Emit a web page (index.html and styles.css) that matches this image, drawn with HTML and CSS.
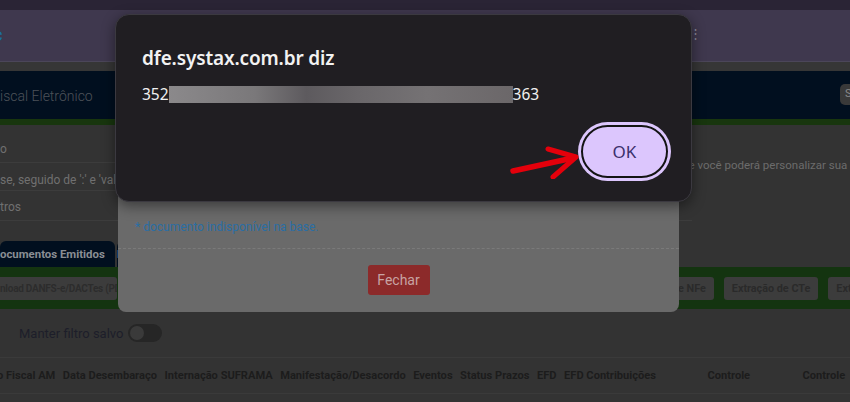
FILE: index.html
```html
<!DOCTYPE html>
<html lang="pt-BR">
<head>
<meta charset="utf-8">
<title>Systax DFe</title>
<link rel="stylesheet" href="styles.css">
</head>
<body>
<div class="page">
  <div class="topstrip"></div>
  <div class="browserbar"><span class="logo-c">c</span><span class="kebab">⋮</span></div>
  <div class="graystrip"></div>
  <header class="navbar">
    <span class="brand">iscal Eletrônico</span>
    <span class="userbtn">S</span>
  </header>
  <div class="greenline"></div>
  <section class="info">
    <div class="info-left">
      <div class="row r1">o</div>
      <div class="row r2">se, seguido de ':' e 'valor'</div>
      <div class="row r3">tros</div>
    </div>
    <div class="info-right">ve você poderá personalizar sua</div>
  </section>
  <nav class="tabs">
    <span class="tab">ocumentos Emitidos</span>
    <span class="tab">Documentos Recebidos</span>
  </nav>
  <div class="toolbar">
    <span class="tbtn first">nload DANFS-e/DACTes (PDF)</span>
    <div class="tgroup">
      <span class="tbtn">Extração de NFe</span>
      <span class="tbtn">Extração de CTe</span>
      <span class="tbtn">Extração de Eventos</span>
    </div>
  </div>
  <div class="filterrow">
    <span class="filterlabel">Manter filtro salvo</span>
    <span class="toggle"><span class="knob"></span></span>
  </div>
  <div class="thead">
    <span class="th first">o Fiscal AM</span>
    <span class="th">Data Desembaraço</span>
    <span class="th">Internação SUFRAMA</span>
    <span class="th">Manifestação/Desacordo</span>
    <span class="th">Eventos</span>
    <span class="th">Status Prazos</span>
    <span class="th">EFD</span>
    <span class="th">EFD Contribuições</span>
    <span class="th ctrl">Controle</span>
    <span class="th ctrl2">Controle</span>
  </div>

  <div class="pmodal">
    <div class="pmodal-body">
      <p class="note">* documento indisponível na base.</p>
    </div>
    <div class="pmodal-foot">
      <span class="fechar">Fechar</span>
    </div>
  </div>

  <div class="dialog">
    <h1 class="dtitle">dfe.systax.com.br diz</h1>
    <p class="dmsg">352<span class="blur"></span>363</p>
    <div class="dactions">
      <button class="okbtn">OK</button>
    </div>
  </div>

  <svg class="arrow" width="80" height="40" viewBox="0 0 80 40">
    <path d="M4 32 L64 19" stroke="#e4000b" stroke-width="5.5" stroke-linecap="round" fill="none"/>
    <path d="M39 10 L67 18 L44 38" stroke="#e4000b" stroke-width="5" stroke-linecap="round" stroke-linejoin="round" fill="none"/>
  </svg>
</div>
</body>
</html>
```

FILE: styles.css
```css
* { box-sizing: border-box; }
html, body { margin: 0; padding: 0; }
body {
  width: 850px;
  height: 402px;
  overflow: hidden;
  background: #333333;
  font-family: Roboto, "Liberation Sans", sans-serif;
}
.page {
  position: relative;
  width: 850px;
  height: 402px;
  overflow: hidden;
  background: #333333;
}
.topstrip { height: 10px; background: #2a2435; }
.browserbar {
  height: 52px;
  background: #3f384e;
  border-bottom: 1px solid #4b4659;
  display: flex;
  align-items: center;
  justify-content: space-between;
}
.logo-c {
  color: #1f6e9f;
  font-size: 18px;
  font-weight: 700;
  margin-left: -7px;
  margin-top: -2px;
}
.kebab {
  color: #8d8999;
  font-size: 13px;
  margin-right: 148px;
  margin-top: -4px;
}
.graystrip { height: 9px; background: #363636; }
.navbar {
  height: 48px;
  background: #010f1f;
  display: flex;
  align-items: center;
  justify-content: space-between;
}
.brand {
  color: #4d5259;
  font-size: 14px;
  font-weight: 300;
  margin-top: 1px;
}
.userbtn {
  width: 26px;
  height: 21px;
  margin-right: -16px;
  margin-top: -2px;
  background: #393939;
  border-radius: 5px;
  color: #8a8a8a;
  font-size: 11px;
  padding: 3px 5px;
}
.greenline { height: 6px; background: #18360e; }

.info {
  display: flex;
  height: 116px;
}
.info-left { width: 692px; flex: none; }
.row {
  border-bottom: 1px solid #3c3c3c;
  color: #707070;
  font-size: 12px;
  display: flex;
  align-items: center;
}
.r1 { height: 38px; padding-top: 10px; }
.r2 { height: 28px; padding-top: 6px; }
.r3 { height: 30px; padding-top: 3px; }
.info-right {
  color: #6c6c6c;
  font-size: 11.5px;
  padding-top: 33px;
  margin-left: -9px;
  white-space: nowrap;
}

.tabs {
  display: flex;
  gap: 2px;
  height: 26px;
}
.tab {
  background: #010f1f;
  border-radius: 6px 6px 0 0;
  color: #8a8e94;
  font-size: 11.4px;
  font-weight: 700;
  width: 115px;
  display: flex;
  align-items: center;
  white-space: nowrap;
  overflow: hidden;
}
.toolbar {
  height: 42px;
  background: #143410;
  display: flex;
  align-items: center;
  white-space: nowrap;
  overflow: hidden;
}
.tbtn {
  background: #3c3c3c;
  border-radius: 3px;
  color: #2a2a2a;
  font-size: 10.8px;
  font-weight: 700;
  height: 23px;
  padding: 0 8px;
  display: flex;
  align-items: center;
  flex: none;
}
.tbtn.first {
  width: 117px;
  padding-left: 0;
  border-radius: 0 3px 3px 0;
  overflow: hidden;
  color: #2c2c2c;
  font-size: 10px;
  letter-spacing: -0.25px;
}
.tgroup {
  display: flex;
  gap: 10px;
  margin-left: 502px;
}
.filterrow {
  height: 49px;
  display: flex;
  align-items: center;
  gap: 5px;
  padding-left: 19px;
  border-bottom: 1px solid #3a3a3a;
}
.filterlabel {
  color: #1d1e2a;
  font-size: 13px;
}
.toggle {
  width: 34px;
  height: 18px;
  border-radius: 9px;
  background: #262626;
  padding: 2px;
  display: flex;
}
.knob {
  width: 14px;
  height: 14px;
  border-radius: 50%;
  background: #3a3a3a;
}
.thead {
  height: 36px;
  display: flex;
  align-items: center;
  gap: 7.5px;
  border-bottom: 1px solid #3a3a3a;
  white-space: nowrap;
}
.th {
  color: #1c1c1c;
  font-size: 11.1px;
  font-weight: 700;
}
.th.first { margin-left: -3px; }
.th.ctrl { margin-left: 44px; }
.th.ctrl2 { margin-left: 45px; }

/* page modal behind the alert */
.pmodal {
  position: absolute;
  left: 118px;
  top: 150px;
  width: 561px;
  height: 162px;
  background: #6a6a6a;
  border-radius: 8px;
  display: flex;
  flex-direction: column;
}
.pmodal-body {
  height: 99px;
  border-bottom: 1px dashed #7a7a7a;
  display: flex;
  align-items: flex-end;
  padding: 0 17px 14px;
}
.note {
  margin: 0;
  color: #2a6ea4;
  font-size: 12px;
}
.pmodal-foot {
  display: flex;
  justify-content: center;
  padding-top: 16px;
}
.fechar {
  width: 62px;
  height: 30px;
  background: #8c2a2a;
  border-radius: 3px;
  color: #c8a3a3;
  font-size: 14px;
  display: flex;
  align-items: center;
  justify-content: center;
}

/* browser alert dialog */
.dialog {
  position: absolute;
  left: 115px;
  top: 14px;
  width: 577px;
  height: 188px;
  background: #201e22;
  border: 1px solid #3b3940;
  border-radius: 14px;
  box-shadow: 0 4px 14px rgba(0, 0, 0, 0.45);
  padding: 29px 20px 20px 26px;
  display: flex;
  flex-direction: column;
  font-family: "Noto Sans", "Open Sans", sans-serif;
}
.dtitle {
  margin: 0;
  color: #f2f2f2;
  font-size: 19px;
  font-weight: 600;
  line-height: 28px;
  letter-spacing: -0.15px;
}
.dmsg {
  margin: 12px 0 0;
  color: #f0f0f0;
  font-size: 15.5px;
  line-height: 20px;
  display: flex;
  align-items: center;
}
.blur {
  display: inline-block;
  width: 344px;
  height: 17px;
  background: linear-gradient(90deg, #8b898b 0%, #7a787a 25%, #5d5a5e 40%, #6a676a 55%, #757274 75%, #6b6769 100%);
}
.dactions {
  margin-top: auto;
  display: flex;
  justify-content: flex-end;
}
.okbtn {
  width: 87px;
  height: 53px;
  margin: 3px;
  border-radius: 27px;
  border: 2px solid #141414;
  background: #dcc6fd;
  box-shadow: 0 0 0 3px #dcc6fd;
  color: #3a2f6b;
  font-family: "Noto Sans", sans-serif;
  font-size: 17px;
  font-weight: 400;
}
.arrow {
  position: absolute;
  left: 509px;
  top: 139px;
}
```
